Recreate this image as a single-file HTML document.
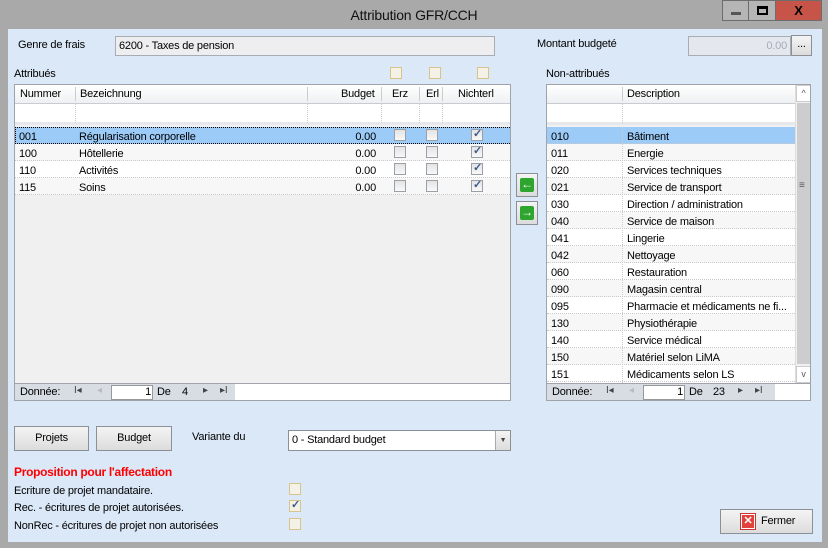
<!DOCTYPE html>
<html><head><meta charset="utf-8"><style>
*{box-sizing:border-box;margin:0;padding:0}
body{width:828px;height:548px;overflow:hidden;background:#a9a9a9;font-family:"Liberation Sans",sans-serif;font-size:11px;letter-spacing:-0.2px;color:#000;position:relative}
.a{position:absolute;white-space:nowrap}
.client{position:absolute;left:8px;top:29px;width:814px;height:513px;background:#dbe8f8}
.tb{background:#eef0f3;border:1px solid #a8acb3}
.btn{position:absolute;border:1px solid #8b8f96;background:linear-gradient(#f4f4f4,#dcdcdc);text-align:center}
.cb{position:absolute;width:12px;height:12px;border:1px solid #d8c38a;background:#f4f1e6}
.gcb{position:absolute;width:12px;height:12px;border:1px solid #9aa0a8;background:linear-gradient(#e4e4e4,#f8f8f8)}
.chk::after{content:"✓";position:absolute;left:1px;top:-3px;font-size:11px;color:#3b5a8c;font-weight:bold}
.grid{position:absolute;background:#f0f0f0;border:1px solid #a0a4aa;overflow:hidden}
.hdr{position:absolute;left:0;top:0;height:19px;background:linear-gradient(#fff,#eef0f2);border-bottom:1px solid #c8ccd2}
.row{position:absolute;left:0;height:17px;border-bottom:1px dotted #c9c9c9}
.nav{position:absolute;left:0;height:18px;background:#d8dde4;border-top:1px solid #a0a4aa}
</style></head><body>
<div class="a" style="left:0;top:0;width:828px;height:29px;text-align:center;font-size:14px;line-height:30px;color:#111">Attribution GFR/CCH</div>
<div class="a" style="left:722px;top:0;width:27px;height:21px;border:1px solid #6d6d6d;background:#b5b5b5"><div class="a" style="left:8px;top:11px;width:10px;height:3px;background:#555"></div></div>
<div class="a" style="left:748px;top:0;width:28px;height:21px;border:1px solid #6d6d6d;background:#b5b5b5"><div class="a" style="left:8px;top:5px;width:11px;height:9px;border:2px solid #000;border-top-width:3px"></div></div>
<div class="a" style="left:775px;top:0;width:47px;height:21px;border:1px solid #6d6d6d;background:#c75449;text-align:center;font-weight:bold;font-size:13px;line-height:19px">X</div>
<div class="client"></div>

<div class="a" style="left:18px;top:39px">Genre de frais</div>
<div class="a tb" style="left:115px;top:36px;width:380px;height:20px;padding:3px 3px;background:#eeeef0">6200 - Taxes de pension</div>
<div class="a" style="left:537px;top:38px">Montant budgeté</div>
<div class="a tb" style="left:688px;top:36px;width:103px;height:20px;text-align:right;padding:3px 3px;color:#a6acb4;background:#e4e8ee">0.00</div>
<div class="btn" style="left:791px;top:35px;width:21px;height:21px;line-height:17px">...</div>

<div class="a" style="left:14px;top:68px">Attribués</div>
<div class="cb" style="left:390px;top:67px"></div>
<div class="cb" style="left:429px;top:67px"></div>
<div class="cb" style="left:477px;top:67px"></div>

<div class="grid" style="left:14px;top:84px;width:497px;height:317px">
 <div class="hdr" style="width:497px">
  <div class="a" style="left:5px;top:3px">Nummer</div>
  <div class="a" style="left:60px;top:2px;height:14px;border-left:1px solid #ccc"></div>
  <div class="a" style="left:65px;top:3px">Bezeichnung</div>
  <div class="a" style="left:292px;top:2px;height:14px;border-left:1px solid #ccc"></div>
  <div class="a" style="left:326px;top:3px">Budget</div>
  <div class="a" style="left:366px;top:2px;height:14px;border-left:1px solid #ccc"></div>
  <div class="a" style="left:377px;top:3px">Erz</div>
  <div class="a" style="left:404px;top:2px;height:14px;border-left:1px solid #ccc"></div>
  <div class="a" style="left:411px;top:3px">Erl</div>
  <div class="a" style="left:427px;top:2px;height:14px;border-left:1px solid #ccc"></div>
  <div class="a" style="left:443px;top:3px">Nichterl</div>
 </div>
 <div class="a" style="left:0;top:19px;width:497px;height:21px;background:#fff;border-bottom:3px solid #e6e8ec"><div class="a" style="left:60px;top:0;height:19px;border-left:1px dotted #ccc"></div><div class="a" style="left:292px;top:0;height:19px;border-left:1px dotted #ccc"></div><div class="a" style="left:366px;top:0;height:19px;border-left:1px dotted #ccc"></div><div class="a" style="left:404px;top:0;height:19px;border-left:1px dotted #ccc"></div><div class="a" style="left:427px;top:0;height:19px;border-left:1px dotted #ccc"></div></div>
 <div class="a" style="left:0;top:42px;width:497px;height:68px;background:#fff"></div>
 <div class="row" style="top:42px;width:497px;background:#9ccbf8;border:1px dotted #000"></div>
 <div class="row" style="top:59px;width:497px;background:#f7f7f7"></div>
 <div class="row" style="top:76px;width:497px;background:#fff"></div>
 <div class="row" style="top:93px;width:497px;background:#f7f7f7"></div>
 <div class="a" style="left:4px;top:44px;line-height:17px">001<br>100<br>110<br>115</div>
 <div class="a" style="left:64px;top:44px;line-height:17px">Régularisation corporelle<br>Hôtellerie<br>Activités<br>Soins</div>
 <div class="a" style="left:320px;top:44px;line-height:17px;text-align:right;width:41px">0.00<br>0.00<br>0.00<br>0.00</div>
 <div class="gcb" style="left:379px;top:44px"></div><div class="gcb" style="left:411px;top:44px"></div><div class="gcb chk" style="left:456px;top:44px"></div>
 <div class="gcb" style="left:379px;top:61px"></div><div class="gcb" style="left:411px;top:61px"></div><div class="gcb chk" style="left:456px;top:61px"></div>
 <div class="gcb" style="left:379px;top:78px"></div><div class="gcb" style="left:411px;top:78px"></div><div class="gcb chk" style="left:456px;top:78px"></div>
 <div class="gcb" style="left:379px;top:95px"></div><div class="gcb" style="left:411px;top:95px"></div><div class="gcb chk" style="left:456px;top:95px"></div>
 <div class="nav" style="top:298px;width:497px">
  <div class="a" style="left:220px;top:0;width:277px;height:17px;background:#fff"></div>
  <div class="a" style="left:5px;top:2px">Donnée:</div>
  <div class="a" style="left:59px;top:1px;font-size:10px;color:#444">I◂</div>
  <div class="a" style="left:82px;top:1px;font-size:10px;color:#bbb">◂</div>
  <div class="a" style="left:96px;top:1px;width:42px;height:15px;background:#fff;border:1px solid #999;text-align:right;padding-right:1px">1</div>
  <div class="a" style="left:142px;top:2px">De</div>
  <div class="a" style="left:167px;top:2px">4</div>
  <div class="a" style="left:188px;top:1px;font-size:10px;color:#444">▸</div>
  <div class="a" style="left:205px;top:1px;font-size:10px;color:#444">▸I</div>
 </div>
</div>

<div class="btn" style="left:516px;top:173px;width:22px;height:24px"><div class="a" style="left:3px;top:4px;width:14px;height:14px;background:#2ea52e;border-radius:2px;color:#fff;font-weight:bold;font-size:12px;line-height:13px">←</div></div>
<div class="btn" style="left:516px;top:201px;width:22px;height:24px"><div class="a" style="left:3px;top:4px;width:14px;height:14px;background:#2ea52e;border-radius:2px;color:#fff;font-weight:bold;font-size:12px;line-height:13px">→</div></div>

<div class="a" style="left:546px;top:68px">Non-attribués</div>
<div class="grid" style="left:546px;top:84px;width:265px;height:317px">
 <div class="hdr" style="width:248px">
  <div class="a" style="left:75px;top:2px;height:14px;border-left:1px solid #ccc"></div>
  <div class="a" style="left:80px;top:3px">Description</div>
 </div>
 <div class="a" style="left:0;top:19px;width:248px;height:21px;background:#fff;border-bottom:3px solid #e6e8ec"><div class="a" style="left:75px;top:0;height:19px;border-left:1px dotted #ccc"></div></div>
 <div class="a" style="left:0;top:42px;width:248px;height:256px;background:#fff"></div>
 <div class="row" style="top:42px;width:248px;background:#9ccbf8"></div>
 <div class="row" style="top:59px;width:248px;background:#f7f7f7"></div>
 <div class="row" style="top:76px;width:248px"></div>
 <div class="row" style="top:93px;width:248px;background:#f7f7f7"></div>
 <div class="row" style="top:110px;width:248px"></div>
 <div class="row" style="top:127px;width:248px;background:#f7f7f7"></div>
 <div class="row" style="top:144px;width:248px"></div>
 <div class="row" style="top:161px;width:248px;background:#f7f7f7"></div>
 <div class="row" style="top:178px;width:248px"></div>
 <div class="row" style="top:195px;width:248px;background:#f7f7f7"></div>
 <div class="row" style="top:212px;width:248px"></div>
 <div class="row" style="top:229px;width:248px;background:#f7f7f7"></div>
 <div class="row" style="top:246px;width:248px"></div>
 <div class="row" style="top:263px;width:248px;background:#f7f7f7"></div>
 <div class="row" style="top:280px;width:248px"></div>
 <div class="a" style="left:75px;top:42px;height:256px;border-left:1px dotted #ccc"></div>
 <div class="a" style="left:4px;top:44px;line-height:17px">010<br>011<br>020<br>021<br>030<br>040<br>041<br>042<br>060<br>090<br>095<br>130<br>140<br>150<br>151</div>
 <div class="a" style="left:80px;top:44px;line-height:17px">Bâtiment<br>Energie<br>Services techniques<br>Service de transport<br>Direction / administration<br>Service de maison<br>Lingerie<br>Nettoyage<br>Restauration<br>Magasin central<br>Pharmacie et médicaments ne fi...<br>Physiothérapie<br>Service médical<br>Matériel selon LiMA<br>Médicaments selon LS</div>
 <div class="a" style="left:248px;top:0;width:16px;height:298px;background:#f0f0f0;border-left:1px solid #ddd">
  <div class="a" style="left:0;top:0;width:15px;height:17px;background:#fff;border:1px solid #ccc;text-align:center;font-size:9px;line-height:15px;color:#555">^</div>
  <div class="a" style="left:1px;top:18px;width:13px;height:261px;background:#cdcdcd"></div>
  <div class="a" style="left:3px;top:95px;font-size:10px;color:#555">≡</div>
  <div class="a" style="left:0;top:281px;width:15px;height:17px;background:#fff;border:1px solid #ccc;text-align:center;font-size:9px;line-height:15px;color:#555">v</div>
 </div>
 <div class="nav" style="top:298px;width:265px">
  <div class="a" style="left:228px;top:0;width:37px;height:17px;background:#fff"></div>
  <div class="a" style="left:5px;top:2px">Donnée:</div>
  <div class="a" style="left:59px;top:1px;font-size:10px;color:#444">I◂</div>
  <div class="a" style="left:82px;top:1px;font-size:10px;color:#bbb">◂</div>
  <div class="a" style="left:96px;top:1px;width:42px;height:15px;background:#fff;border:1px solid #999;text-align:right;padding-right:1px">1</div>
  <div class="a" style="left:142px;top:2px">De</div>
  <div class="a" style="left:166px;top:2px">23</div>
  <div class="a" style="left:191px;top:1px;font-size:10px;color:#444">▸</div>
  <div class="a" style="left:208px;top:1px;font-size:10px;color:#444">▸I</div>
 </div>
</div>

<div class="btn" style="left:14px;top:426px;width:75px;height:25px;line-height:23px">Projets</div>
<div class="btn" style="left:96px;top:426px;width:76px;height:25px;line-height:23px">Budget</div>
<div class="a" style="left:192px;top:431px">Variante du</div>
<div class="a" style="left:288px;top:430px;width:223px;height:21px;background:#fff;border:1px solid #8b8f96;padding:3px 3px">0 - Standard budget<div class="a" style="right:0;top:0;width:15px;height:19px;background:linear-gradient(#f4f4f4,#dcdcdc);border-left:1px solid #aaa;font-size:7px;text-align:center;line-height:19px;color:#444">▼</div></div>

<div class="a" style="left:14px;top:465px;color:#f00;font-weight:bold;font-size:12px;letter-spacing:-0.3px">Proposition pour l'affectation</div>
<div class="a" style="left:14px;top:485px">Ecriture de projet mandataire.</div>
<div class="a" style="left:14px;top:502px">Rec. - écritures de projet autorisées.</div>
<div class="a" style="left:14px;top:520px">NonRec - écritures de projet non autorisées</div>
<div class="cb" style="left:289px;top:483px"></div>
<div class="cb chk" style="left:289px;top:500px"></div>
<div class="cb" style="left:289px;top:518px"></div>

<div class="btn" style="left:720px;top:509px;width:93px;height:25px;line-height:23px;text-align:left;padding-left:40px">Fermer<div class="a" style="left:20px;top:4px;width:14px;height:15px;background:#e0433b;border:1px solid #fff;outline:1px solid #c33;color:#fff;font-weight:bold;font-size:11px;line-height:13px;text-align:center">✕</div></div>
</body></html>
